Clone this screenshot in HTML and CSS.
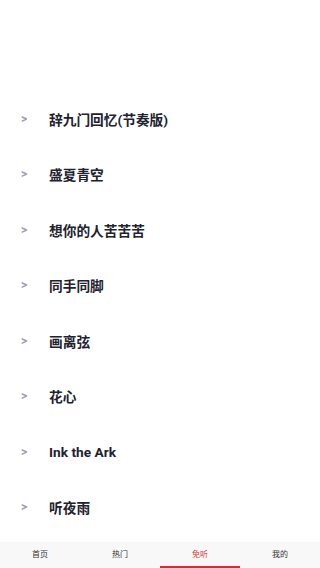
FILE: index.html
```html
<!doctype html>
<html>
<head>
<meta charset="utf-8">
<title>免听</title>
<link rel="stylesheet" href="styles.css">
</head>
<body>
<div class="page">
	<ul class="song_list">
		<li class="song"><span class="arrow">&gt;</span><span class="name">辞九门回忆(节奏版)</span></li>
		<li class="song"><span class="arrow">&gt;</span><span class="name">盛夏青空</span></li>
		<li class="song"><span class="arrow">&gt;</span><span class="name">想你的人苦苦苦</span></li>
		<li class="song"><span class="arrow">&gt;</span><span class="name">同手同脚</span></li>
		<li class="song"><span class="arrow">&gt;</span><span class="name">画离弦</span></li>
		<li class="song"><span class="arrow">&gt;</span><span class="name">花心</span></li>
		<li class="song"><span class="arrow">&gt;</span><span class="name">Ink the Ark</span></li>
		<li class="song"><span class="arrow">&gt;</span><span class="name">听夜雨</span></li>
	</ul>
	<div class="tab_bar">
		<a href="javascript:;" class="tab">首页</a>
		<a href="javascript:;" class="tab">热门</a>
		<a href="javascript:;" class="tab active">免听</a>
		<a href="javascript:;" class="tab">我的</a>
	</div>
</div>
</body>
</html>
```
FILE: styles.css
```css
*{margin:0;padding:0;}
html,body{height:100%;}
body{background:#fff; font-family:Roboto,"Noto Sans CJK SC",sans-serif;}
.page{height:100%; display:flex; flex-direction:column;}
.song_list{list-style:none; flex:1; padding-top:91px;}
.song{height:55.5px; display:flex; align-items:center;}
.arrow{width:49px; padding-left:21px; box-sizing:border-box; font-size:12px; font-weight:bold; color:#9d9dab;}
.name{font-size:13.7px; font-weight:bold; color:#22222e;}
.tab_bar{height:26px; background:#f8f8f8; display:flex;}
.tab{flex:1; text-align:center; font-size:8px; line-height:26px; color:#333; text-decoration:none; box-sizing:border-box; border-bottom:2px solid transparent;}
.tab.active{color:#e0383e; border-bottom-color:#d22f35;}
```
